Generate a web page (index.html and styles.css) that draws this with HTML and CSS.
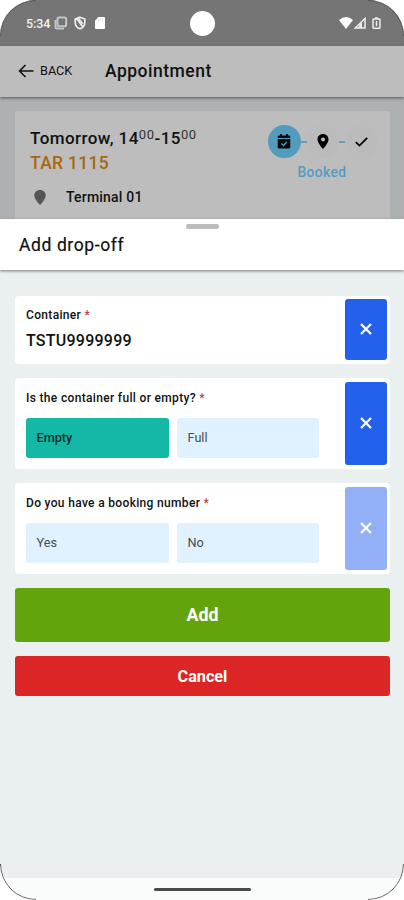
FILE: index.html
```html
<!DOCTYPE html>
<html lang="en">
<head>
<meta charset="utf-8">
<title>Appointment</title>
<link rel="stylesheet" href="styles.css">
</head>
<body>
<div class="phone">
  <div class="status">
    <span class="time">5:34</span>
    <svg class="s-copy" width="14" height="14" viewBox="0 0 14 14" fill="none" stroke="#c4c4c4" stroke-width="2"><rect x="3.5" y="1.500" width="8.700" height="8.700" rx="1.500"/><path d="M1.500 4v7.300q0 1.200 1.200 1.200H10"/></svg>
    <svg class="s-shield" width="12" height="14" viewBox="0 0 12 14" fill="none" stroke="#f0f0f0" stroke-width="1.600"><path d="M6 1.200 10.800 3v3.500c0 3-2 5.300-4.800 6.300C3.200 11.800 1.200 9.500 1.200 6.500V3zM2.500 2.500l6 8M4.800 2.800l4 5"/></svg>
    <svg class="s-sd" width="10" height="12" viewBox="0 0 10 12" fill="#fff"><path d="M3.500 0H9q1 0 1 1v10q0 1-1 1H1q-1 0-1-1V3.500z"/><path d="M3.800 1.500v2M5.700 1.500v2M7.600 1.500v2" stroke="#d0d0d0" stroke-width=".8"/></svg>
    <span class="camera"></span>
    <svg class="s-wifi" width="14" height="12" viewBox="0 0 14 12" fill="#fff"><path d="M0 3Q7-3 14 3L7 12z"/></svg>
    <svg class="s-cell" width="12" height="12" viewBox="0 0 12 12"><path d="M11 1.500V11H1.300z" fill="none" stroke="#eee" stroke-width="1.500"/><path d="M6 7 8 5v6H4z" fill="#eee"/></svg>
    <svg class="s-batt" width="9" height="12" viewBox="0 0 9 12" fill="none" stroke="#eee" stroke-width="1.500"><path d="M3 1h3"/><rect x="1" y="2" width="7" height="9.200" rx=".7"/><path d="M4.500 4v5"/></svg>
  </div>
  <header class="topbar">
    <svg width="16" height="14" viewBox="0 0 16 14" fill="none" stroke="#111" stroke-width="1.600"><path d="M15.500 7H1.500M7.500 1 1.500 7l6 6"/></svg>
    <span class="back">BACK</span>
    <h1>Appointment</h1>
  </header>
  <main class="behind">
    <section class="booking">
      <div class="details">
        <div class="when">Tomorrow, 14<sup>00</sup>-15<sup>00</sup></div>
        <div class="plate">TAR 1115</div>
        <div class="place">
          <svg width="12" height="15" viewBox="0 0 12 15"><path d="M6 0c3.300 0 5.700 2.400 5.700 5.600C11.700 9.500 6 15 6 15S.3 9.500.3 5.600C.3 2.400 2.700 0 6 0z" fill="#555"/></svg>
          <span>Terminal 01</span>
        </div>
      </div>
      <div class="progress">
        <div class="steps">
          <span class="step active"><svg width="14" height="15" viewBox="0 0 14 15"><path d="M3 0h2v1.500h4V0h2v1.500h1q1.300 0 1.300 1.300V4H.7V2.800q0-1.300 1.300-1.300h1zM.7 5h12.600v8.200q0 1.300-1.300 1.300H2q-1.300 0-1.300-1.300z" fill="#050a0d"/><path d="M4.500 9.500l2 2 3.300-3.500" fill="none" stroke="#549cbe" stroke-width="1.300"/></svg></span>
          <span class="dash"></span>
          <span class="step"><svg width="12" height="15" viewBox="0 0 12 15"><path fill-rule="evenodd" d="M6 0c3.200 0 5.500 2.300 5.500 5.400C11.500 9 6 15 6 15S.5 9 .5 5.400C.5 2.300 2.800 0 6 0zm0 3.500a2 2 0 1 0 0 4 2 2 0 1 0 0-4z"/></svg></span>
          <span class="dash"></span>
          <span class="step"><svg width="13" height="10" viewBox="0 0 13 10" fill="none" stroke="#000" stroke-width="1.700"><path d="M.8 5.200 4.500 8.600 12.200.8"/></svg></span>
        </div>
        <div class="state">Booked</div>
      </div>
    </section>
  </main>
  <section class="sheet">
    <header class="sheet-head"><span class="grip"></span><h2>Add drop-off</h2></header>
    <div class="form">
      <div class="field short">
        <div class="body"><label>Container <i>*</i></label><div class="value">TSTU9999999</div></div>
        <button class="clear"><svg width="12" height="12" viewBox="0 0 12 12"><path d="M1 1l10 10M11 1 1 11"/></svg></button>
      </div>
      <div class="field">
        <div class="body"><label>Is the container full or empty? <i>*</i></label>
          <div class="options"><span class="option on">Empty</span><span class="option">Full</span></div></div>
        <button class="clear"><svg width="12" height="12" viewBox="0 0 12 12"><path d="M1 1l10 10M11 1 1 11"/></svg></button>
      </div>
      <div class="field">
        <div class="body"><label>Do you have a booking number <i>*</i></label>
          <div class="options"><span class="option">Yes</span><span class="option">No</span></div></div>
        <button class="clear off"><svg width="12" height="12" viewBox="0 0 12 12"><path d="M1 1l10 10M11 1 1 11"/></svg></button>
      </div>
      <button class="action add">Add</button>
      <button class="action cancel">Cancel</button>
    </div>
    <footer class="nav"><span></span></footer>
  </section>
  <svg class="bezel" width="404" height="900" viewBox="0 0 404 900" fill="none" stroke="#5a5a5a" stroke-width="1"><path d="M.5 36A35.500 35.500 0 0 1 36 .5H25M403.500 36A35.500 35.500 0 0 0 368 .5h11M.5 866v-2A35.500 35.500 0 0 0 36 899.500M403.500 864A35.500 35.500 0 0 1 368 899.500"/></svg>
</div>
</body>
</html>
```
FILE: styles.css
```css
* { box-sizing: border-box; }
body { margin: 0; background: #fff; font-family: Roboto, "Liberation Sans", sans-serif; color: #111; }
h1, h2 { margin: 0; font-weight: 500; }
svg { display: block; flex: none; }
button { border: 0; padding: 0; font-family: inherit; }
.phone { position: relative; width: 404px; height: 900px; overflow: hidden; border-radius: 36px; background: #aeb1b2; display: flex; flex-direction: column; }
.bezel { position: absolute; inset: 0; z-index: 2; }
.status { height: 46px; flex: none; background: #757575; display: flex; align-items: center; padding: 0 23px 0 26px; color: #f2f2f2; }
.time { font-size: 12.5px; font-weight: 500; width: 28px; letter-spacing: -.1px; }
.s-shield { margin-left: 6px; }
.s-sd { margin-left: 9px; }
.camera { width: 25px; height: 25px; border-radius: 50%; background: #fff; margin-left: 85px; }
.s-wifi { margin-left: auto; }
.s-cell { margin-left: 1px; }
.s-batt { margin-left: 6px; }
.topbar { height: 51px; flex: none; background: #bdbdbd; display: flex; align-items: center; padding-left: 18px; box-shadow: 0 1px 3px #555; z-index: 1; }
.topbar svg { margin-top: -1px; }
.back { font-size: 12.7px; line-height: 16px; margin: -2px 0 0 6px; width: 65px; }
.topbar h1 { font-size: 17.5px; line-height: 24px; margin-top: -1px; letter-spacing: .5px; }
.behind { height: 122px; flex: none; padding: 14px 14px 0 15px; }
.booking { height: 108px; background: #bdbdbd; border-radius: 2px 2px 0 0; padding: 16px 12px 0 15px; display: flex; justify-content: space-between; }
.when { font-size: 17px; line-height: 22px; font-weight: 500; letter-spacing: .42px; white-space: nowrap; }
.when sup { font-size: 13px; line-height: 0; font-weight: 400; vertical-align: 5px; letter-spacing: .6px; color: #333; }
.plate { font-size: 17.5px; line-height: 24px; margin-top: 2px; font-weight: 500; letter-spacing: .3px; color: #a86710; }
.place { display: flex; align-items: center; gap: 20px; margin-top: 14px; padding-left: 4px; font-size: 14px; line-height: 16px; font-weight: 500; letter-spacing: .2px; }
.progress { width: 110px; margin-top: -2px; }
.steps { display: flex; align-items: center; }
.step { width: 32.5px; height: 33px; border-radius: 50%; background: #bbb; display: flex; align-items: center; justify-content: center; }
.step.active { background: #549cbe; }
.dash { width: 6px; height: 2px; background: #609fbc; }
.state { margin: 6px 2px 0 0; font-size: 13.8px; line-height: 17px; font-weight: 500; color: #549cbe; text-align: center; letter-spacing: .4px; }
.sheet { flex: 1; background: #eaeff0; display: flex; flex-direction: column; z-index: 1; }
.sheet-head { height: 51px; flex: none; background: #fff; box-shadow: 0 1px 3px #777; display: flex; flex-direction: column; }
.grip { width: 33px; height: 5px; border-radius: 2px; background: #bdbdbd; margin: 5px auto 0; }
.sheet-head h2 { font-size: 17.5px; line-height: 24px; margin: 4px 0 0 19px; font-weight: 400; letter-spacing: .6px; -webkit-text-stroke: .2px #111; }
.form { flex: 1; padding: 26px 14px 0 15px; display: flex; flex-direction: column; gap: 14px; }
.field { height: 91px; background: #fff; border-radius: 4px; padding: 4px 3.5px 4px 11px; display: flex; justify-content: space-between; }
.field.short { height: 68px; padding-top: 3px; }
.body { width: 293px; padding-top: 8px; display: flex; flex-direction: column; }
.field label { font-size: 12px; line-height: 16px; font-weight: 500; white-space: nowrap; letter-spacing: .33px; }
.field label i { font-style: normal; color: #b5434d; }
.value { margin-top: 9px; font-size: 16px; line-height: 18px; font-weight: 500; letter-spacing: .24px; }
.options { display: grid; grid-template-columns: 143px 142px; gap: 8px; margin-top: 12px; }
.option { height: 40px; border-radius: 3px; background: #e0f1ff; font-size: 12.7px; line-height: 39px; padding-left: 10.5px; color: #444e57; }
.option.on { background: #14b8a6; font-weight: 500; color: #05302b; }
.clear { width: 42px; border-radius: 3px; background: #2360eb; display: flex; align-items: center; justify-content: center; }
.clear svg { fill: none; stroke: #fff; stroke-width: 2.2; margin-top: -1px; }
.clear.off { background: #93aff5; }
.action { flex: none; border-radius: 3px; color: #fff; font-weight: 700; }
.add { height: 54px; background: #63a30b; font-size: 17.8px; padding-bottom: 1px; }
.cancel { height: 40px; background: #dc2626; font-size: 16.2px; }
.nav { height: 22px; flex: none; background: #fafbfb; display: flex; justify-content: center; padding-top: 10px; }
.nav span { width: 97px; height: 3px; border-radius: 2px; background: #484a4a; }
```
